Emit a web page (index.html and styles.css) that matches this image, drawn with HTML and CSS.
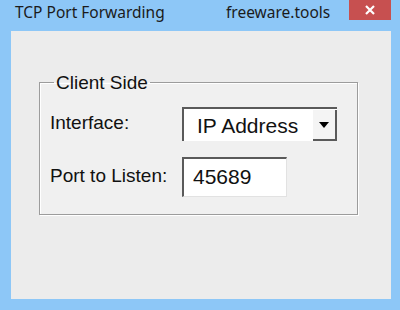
FILE: index.html
```html
<!doctype html>
<html>
<head>
<meta charset="utf-8">
<title>TCP Port Forwarding</title>
<link rel="stylesheet" href="styles.css">
</head>
<body>
<div class="window">
	<div class="titlebar">
		<span class="title">TCP Port Forwarding</span>
		<span class="brand">freeware.tools</span>
		<span class="close">
			<svg width="12" height="10" viewBox="0 0 12 10"><path d="M2 1 L10 9 M10 1 L2 9" stroke="#fff" stroke-width="2.2"/></svg>
		</span>
	</div>
	<div class="client">
		<fieldset class="group">
			<legend>Client Side</legend>
			<div class="rows">
				<label>Interface:</label>
				<div class="combo">
					<span class="combo-text">IP Address</span>
					<span class="combo-btn">
						<svg width="10" height="6" viewBox="0 0 10 6"><path d="M0 0 H10 L5 6 Z" fill="#000"/></svg>
					</span>
				</div>
				<label>Port to Listen:</label>
				<div class="edit">45689</div>
			</div>
		</fieldset>
	</div>
</div>
</body>
</html>
```
FILE: styles.css
```css
*{box-sizing:border-box;}
html,body{margin:0;padding:0;}
body{background:#8dc7f7;width:400px;height:310px;overflow:hidden;}
.window{width:400px;height:310px;display:flex;flex-direction:column;}
.titlebar{height:31px;display:flex;align-items:flex-start;font-family:"Noto Sans",sans-serif;font-size:15.5px;color:#1b1b1b;}
.title{margin:1px 0 0 15px;width:211px;}
.brand{margin-top:1px;}
.close{margin-left:auto;margin-right:9px;width:42px;height:20px;background:#c75050;display:flex;align-items:center;justify-content:center;}
.client{flex:1;margin:0 9px 11px 11px;background:#ececec;padding:42px 33px 0 28px;font-family:"Liberation Sans",Arial,sans-serif;color:#111;}
.group{margin:0;padding:0 0 17px 10px;border:1px solid #9c9c9c;box-shadow:inset 1px 1px #fff,1px 1px #fff;background:#f0f0f0;}
.group legend{font-size:19px;line-height:19px;padding:0 2px;margin-left:4px;}
.group legend span{position:relative;top:1px;}
.rows{display:grid;grid-template-columns:132px auto;row-gap:15px;align-items:center;padding-top:15px;font-size:19px;}
.rows label{padding-bottom:2px;}
.combo{width:155px;height:34px;background:#fff;border-top:2px solid #5a5a5a;border-left:2px solid #5a5a5a;display:flex;align-items:flex-start;}
.combo-text{font-size:21px;padding:5px 0 0 13px;flex:1;}
.combo-btn{width:24px;height:31px;margin-top:1px;background:#f4f4f4;border-right:2px solid #5a5a5a;border-bottom:2px solid #5a5a5a;display:flex;align-items:center;justify-content:center;}
.edit{width:105px;height:40px;margin-top:1px;background:#fff;border-top:2px solid #5a5a5a;border-left:2px solid #5a5a5a;border-right:1px solid #e2e2e2;border-bottom:1px solid #e2e2e2;font-size:21px;padding:6px 0 0 9px;}
```
